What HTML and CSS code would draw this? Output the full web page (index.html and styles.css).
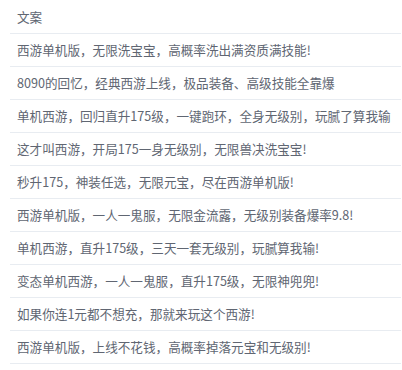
FILE: index.html
```html
<!DOCTYPE html>
<html lang="zh">
<head>
<meta charset="utf-8">
<link rel="stylesheet" href="styles.css">
</head>
<body>
<div class="wrap">
  <div class="table">
    <div class="row head">文案</div>
    <div class="row">西游单机版，无限洗宝宝，高概率洗出满资质满技能!</div>
    <div class="row">8090的回忆，经典西游上线，极品装备、高级技能全靠爆</div>
    <div class="row">单机西游，回归直升175级，一键跑环，全身无级别，玩腻了算我输</div>
    <div class="row">这才叫西游，开局175一身无级别，无限兽决洗宝宝!</div>
    <div class="row">秒升175，神装任选，无限元宝，尽在西游单机版!</div>
    <div class="row">西游单机版，一人一鬼服，无限金流露，无级别装备爆率9.8!</div>
    <div class="row">单机西游，直升175级，三天一套无级别，玩腻算我输!</div>
    <div class="row">变态单机西游，一人一鬼服，直升175级，无限神兜兜!</div>
    <div class="row">如果你连1元都不想充，那就来玩这个西游!</div>
    <div class="row">西游单机版，上线不花钱，高概率掉落元宝和无级别!</div>
  </div>
</div>
</body>
</html>
```
FILE: styles.css
```css
html, body {
  margin: 0;
  padding: 0;
  background: #ffffff;
}
.wrap {
  padding: 1px 1px 0 10px;
}
.table {
  display: flex;
  flex-direction: column;
  font-family: "Noto Sans CJK SC", "Noto Sans", sans-serif;
  font-size: 12.6px;
  font-weight: 400;
  color: #606672;
}
.row {
  height: 32px;
  line-height: 32px;
  padding-left: 7px;
  border-bottom: 1px solid #e8ecf1;
  white-space: nowrap;
  overflow: hidden;
}
```
